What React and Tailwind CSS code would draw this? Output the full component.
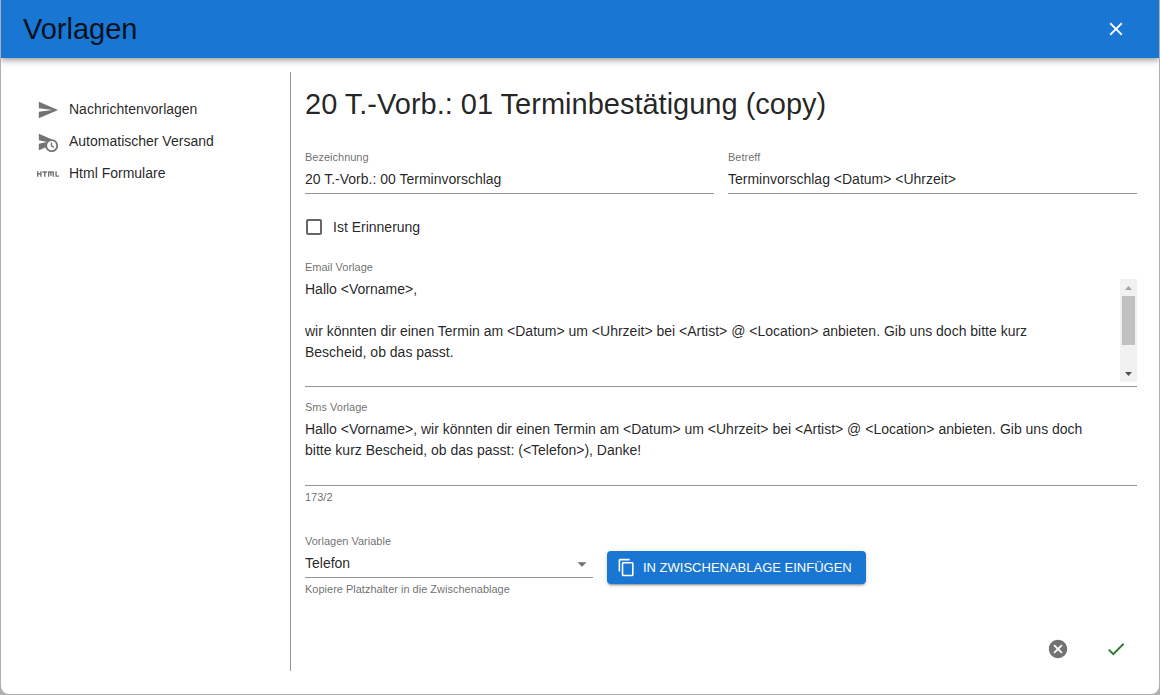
import React, { useState } from "react";
import {
  MdArrowDropDown,
  MdCancel,
  MdCheck,
  MdClose,
  MdContentCopy,
  MdHtml,
} from "react-icons/md";

const SendIcon = ({ className }) => (
  <svg className={className} viewBox="0 0 24 24" fill="currentColor">
    <path d="M2.01 21L23 12 2.01 3 2 10l15 2-15 2z" />
  </svg>
);

const ScheduleSendIcon = ({ className }) => (
  <svg className={className} viewBox="0 0 24 24" fill="currentColor">
    <path d="M16.500 12.500H15v4l3 2 .75-1.230-2.250-1.520V12.500zM16 9 2 3v7l9 2-9 2v7l7.270-3.110C10.090 20.830 12.790 23 16 23c3.860 0 7-3.140 7-7s-3.140-7-7-7zm0 12c-2.750 0-4.980-2.220-5-4.970v-.07c.02-2.740 2.250-4.970 5-4.970 2.760 0 5 2.240 5 5S18.760 21 16 21z" />
  </svg>
);

const NAV_ITEMS = [
  { label: "Nachrichtenvorlagen", icon: SendIcon },
  { label: "Automatischer Versand", icon: ScheduleSendIcon },
  { label: "Html Formulare", icon: MdHtml },
];

const EMAIL_TEXT =
  "Hallo <Vorname>,\n\nwir könnten dir einen Termin am <Datum> um <Uhrzeit> bei <Artist> @ <Location> anbieten. Gib uns doch bitte kurz Bescheid, ob das passt.\n\n\n";

const SMS_TEXT =
  "Hallo <Vorname>, wir könnten dir einen Termin am <Datum> um <Uhrzeit> bei <Artist> @ <Location> anbieten. Gib uns doch bitte kurz Bescheid, ob das passt: (<Telefon>), Danke!";

const Field = ({ id, label, helper, children }) => (
  <div>
    <label
      htmlFor={id}
      className="block text-[11px] leading-[14px] text-black/60"
    >
      {label}
    </label>
    {children}
    {helper && (
      <p className="mt-1 text-[11px] leading-[14px] text-black/60">{helper}</p>
    )}
  </div>
);

const TextInput = ({ id, label, defaultValue }) => (
  <Field id={id} label={label}>
    <input
      id={id}
      type="text"
      defaultValue={defaultValue}
      className="block w-full h-[30px] border-b border-[#949494] outline-none"
    />
  </Field>
);

const ScrollTrack = () => (
  <div
    className="flex w-[17px] shrink-0 flex-col items-center bg-[#f1f1f1]"
    aria-hidden="true"
  >
    <svg className="h-[17px] w-[17px]" viewBox="0 0 17 17" fill="#a3a3a3">
      <path d="M5 11h7L8.500 7z" />
    </svg>
    <div className="h-[49px] w-[13px] bg-[#c1c1c1]" />
    <svg
      className="mt-auto h-[17px] w-[17px]"
      viewBox="0 0 17 17"
      fill="#505050"
    >
      <path d="M5 7h7l-3.500 4z" />
    </svg>
  </div>
);

const Sidebar = () => (
  <nav className="w-[290px] shrink-0 border-r border-[#949494] pt-[21px] pl-9">
    <ul>
      {NAV_ITEMS.map(({ label, icon: Icon }) => (
        <li key={label}>
          <a href="#" className="flex h-8 items-center gap-[10px]">
            <Icon className="mt-0.5 h-[22px] w-[22px] text-black/55" />
            <span>{label}</span>
          </a>
        </li>
      ))}
    </ul>
  </nav>
);

const App = () => {
  const [reminder, setReminder] = useState(false);

  return (
    <div className="flex min-h-screen flex-col bg-[#b0b0b0] px-px pb-px font-['Liberation_Sans',Arial,sans-serif] text-[14px] leading-[21px] text-black/87">
      <div className="flex flex-1 flex-col overflow-hidden rounded-b-lg bg-white">
        <header className="flex h-[58px] items-center justify-between bg-[#1976d2] px-[22px] shadow-[0_2px_4px_-1px_rgba(0,0,0,0.2),0_4px_5px_rgba(0,0,0,0.14),0_1px_10px_rgba(0,0,0,0.12)]">
          <h1 className="text-[29px] leading-9">Vorlagen</h1>
          <button
            type="button"
            aria-label="Schließen"
            className="flex h-[42px] w-[42px] items-center justify-center text-[22px] text-white"
          >
            <MdClose />
          </button>
        </header>

        <div className="flex flex-1 pt-[14px] pb-[23px]">
          <Sidebar />

          <main className="flex min-w-0 flex-1 flex-col pl-[14px] pr-[22px]">
            <h2 className="mt-[14px] text-[29px] leading-9">
              20 T.-Vorb.: 01 Terminbestätigung (copy)
            </h2>

            <div className="mt-7 grid grid-cols-2 gap-[14px]">
              <TextInput
                id="bezeichnung"
                label="Bezeichnung"
                defaultValue="20 T.-Vorb.: 00 Terminvorschlag"
              />
              <TextInput
                id="betreff"
                label="Betreff"
                defaultValue="Terminvorschlag <Datum> <Uhrzeit>"
              />
            </div>

            <label className="my-3 flex h-[42px] items-center gap-[11px] self-start">
              <input
                type="checkbox"
                checked={reminder}
                onChange={(e) => setReminder(e.target.checked)}
                className="ml-px h-4 w-4 appearance-none rounded-xs border-2 border-[#666666] checked:bg-[#1976d2]"
              />
              Ist Erinnerung
            </label>

            <Field id="email" label="Email Vorlage">
              <div className="flex border-b border-[#949494] pt-[5px] pb-1">
                <textarea
                  id="email"
                  rows={5}
                  defaultValue={EMAIL_TEXT}
                  className="block h-[103px] min-w-0 flex-1 resize-none pr-10 outline-none [scrollbar-width:none]"
                />
                <ScrollTrack />
              </div>
            </Field>

            <div className="mt-[13px]">
              <Field id="sms" label="Sms Vorlage" helper="173/2">
                <div className="border-b border-[#949494] pt-[5px] pb-[3px]">
                  <textarea
                    id="sms"
                    rows={3}
                    defaultValue={SMS_TEXT}
                    className="block w-full resize-none pr-10 outline-none [scrollbar-width:none]"
                  />
                </div>
              </Field>
            </div>

            <div className="mt-[30px] flex items-start gap-[14px]">
              <div className="w-72">
                <Field
                  id="variable"
                  label="Vorlagen Variable"
                  helper="Kopiere Platzhalter in die Zwischenablage"
                >
                  <div className="relative">
                    <select
                      id="variable"
                      defaultValue="Telefon"
                      className="block h-[30px] w-full appearance-none border-b border-[#949494] pt-0.5 outline-none"
                    >
                      <option>Telefon</option>
                    </select>
                    <MdArrowDropDown className="pointer-events-none absolute top-[5px] right-0 text-[22px] text-black/55" />
                  </div>
                </Field>
              </div>
              <button
                type="button"
                className="mt-[17px] flex h-[33px] items-center gap-[7px] rounded bg-[#1976d2] pr-[14px] pl-[10px] text-[13px] text-white uppercase shadow-[0_3px_1px_-2px_rgba(0,0,0,0.2),0_2px_2px_rgba(0,0,0,0.14),0_1px_5px_rgba(0,0,0,0.12)]"
              >
                <MdContentCopy className="text-[19px]" />
                In Zwischenablage einfügen
              </button>
            </div>

            <div className="mt-auto flex justify-end gap-4">
              <button
                type="button"
                aria-label="Abbrechen"
                className="flex h-11 w-[42px] items-center justify-center text-[22px] text-black/55"
              >
                <MdCancel />
              </button>
              <button
                type="button"
                aria-label="Speichern"
                className="flex h-11 w-[42px] items-center justify-center text-[22px] text-[#2e7d32]"
              >
                <MdCheck />
              </button>
            </div>
          </main>
        </div>
      </div>
    </div>
  );
};

export default App;
